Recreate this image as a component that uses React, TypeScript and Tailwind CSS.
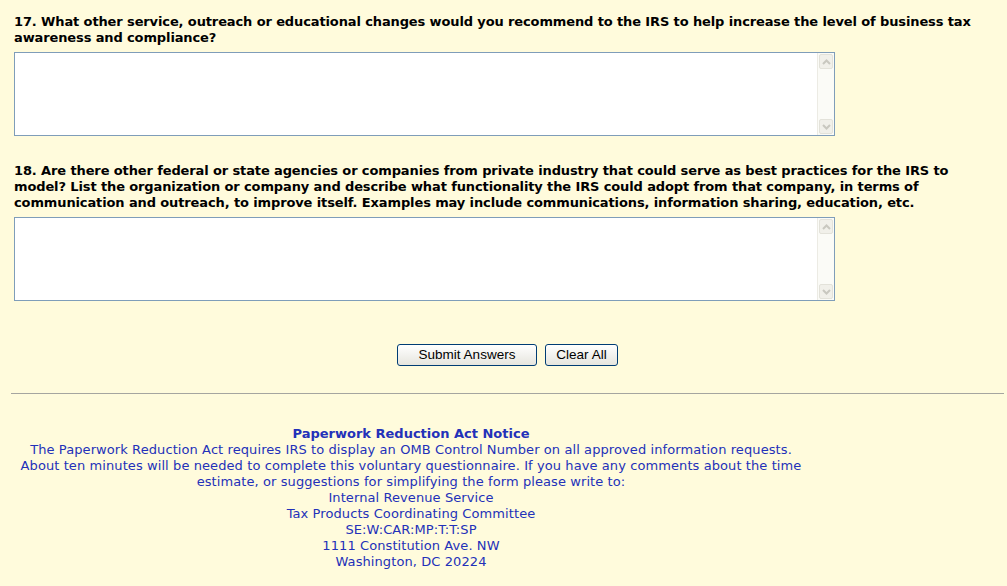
import React from 'react'

const Scrollbar = () => (
  <div className="flex w-[17px] flex-col justify-between border-l border-[#ecebe4] bg-[#fbfbf7]">
    <div className="m-px flex h-[15px] items-center justify-center rounded-[2px] border border-[#e3e2da] bg-[#f1f0ea]">
      <svg width="9" height="6" viewBox="0 0 9 6">
        <path d="M1 5 L4.5 1.5 L8 5" fill="none" stroke="#c9c8c0" strokeWidth="2" />
      </svg>
    </div>
    <div className="m-px flex h-[15px] items-center justify-center rounded-[2px] border border-[#e3e2da] bg-[#f1f0ea]">
      <svg width="9" height="6" viewBox="0 0 9 6">
        <path d="M1 1 L4.5 4.5 L8 1" fill="none" stroke="#c9c8c0" strokeWidth="2" />
      </svg>
    </div>
  </div>
)

const AnswerBox = () => (
  <div className="flex h-[84px] w-[821px] border border-[#7f9db9] bg-white">
    <textarea className="flex-1 resize-none overflow-hidden bg-white outline-none" />
    <Scrollbar />
  </div>
)

const Question = ({ lines }: { lines: string[] }) => (
  <div className="mb-[6px] text-[13px] font-bold leading-[16px] tracking-[-0.12px] text-black">
    {lines.map((l) => (
      <div key={l} className="whitespace-nowrap">{l}</div>
    ))}
  </div>
)

const footerLines = [
  'The Paperwork Reduction Act requires IRS to display an OMB Control Number on all approved information requests.',
  'About ten minutes will be needed to complete this voluntary questionnaire. If you have any comments about the time',
  'estimate, or suggestions for simplifying the form please write to:',
  'Internal Revenue Service',
  'Tax Products Coordinating Committee',
  'SE:W:CAR:MP:T:T:SP',
  '1111 Constitution Ave. NW',
  'Washington, DC 20224',
]

const btn =
  'h-[22px] rounded-[3px] border border-[#003c74] bg-gradient-to-b from-white to-[#e6e5de] text-[13.5px] leading-[20px] text-black font-["Liberation_Sans",Arial,sans-serif]'

export default function App() {
  return (
    <div className="min-h-[586px] w-[1007px] overflow-hidden bg-[#fffbdc] font-['DejaVu_Sans',Verdana,sans-serif]">
      <div className="px-[14px] pt-[14px]">
        <Question
          lines={[
            '17. What other service, outreach or educational changes would you recommend to the IRS to help increase the level of business tax',
            'awareness and compliance?',
          ]}
        />
        <AnswerBox />

        <div className="h-[27px]" />
        <Question
          lines={[
            '18. Are there other federal or state agencies or companies from private industry that could serve as best practices for the IRS to',
            'model? List the organization or company and describe what functionality the IRS could adopt from that company, in terms of',
            'communication and outreach, to improve itself. Examples may include communications, information sharing, education, etc.',
          ]}
        />
        <AnswerBox />
      </div>

      <div className="mt-[43px] flex w-[1007px] justify-center gap-[8px] pl-[8px]">
        <button className={`${btn} w-[140px]`}>Submit Answers</button>
        <button className={`${btn} w-[73px]`}>Clear All</button>
      </div>

      <div className="ml-[11px] mr-[3px] mt-[27px] h-px bg-[#a5a5a0]" />

      <div className="mt-[32px] w-[822px] text-center text-[13px] leading-[16px] tracking-[0.09px] text-[#2331b9]">
        <div className="font-bold tracking-normal">Paperwork Reduction Act Notice</div>
        {footerLines.map((l) => (
          <div key={l} className="whitespace-nowrap">{l}</div>
        ))}
      </div>
    </div>
  )
}
